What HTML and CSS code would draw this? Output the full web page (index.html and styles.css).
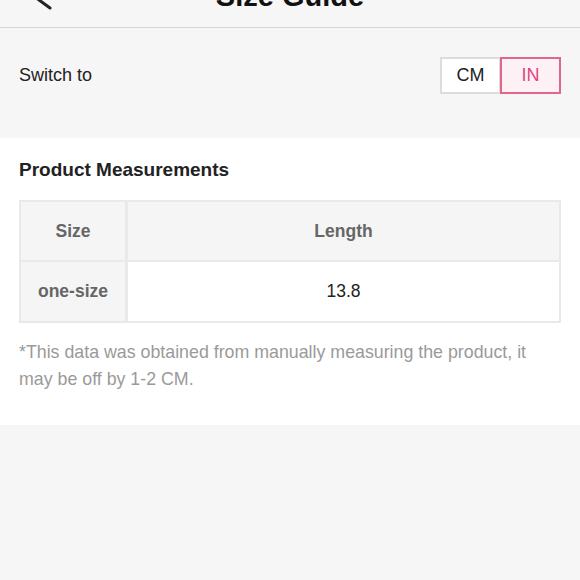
FILE: index.html
```html
<!DOCTYPE html>
<html lang="en">
<head>
<meta charset="utf-8">
<title>Size Guide</title>
<link rel="stylesheet" href="styles.css">
</head>
<body>
<header class="topbar">
  <div class="back">
    <svg width="24" height="40" viewBox="0 0 24 40" aria-hidden="true">
      <polyline points="20,3 5,14 20,25" fill="none" stroke="#222" stroke-width="3" stroke-linecap="round" stroke-linejoin="round"/>
    </svg>
  </div>
  <h1 class="title">Size Guide</h1>
  <div class="spacer"></div>
</header>

<section class="switch-row">
  <span class="switch-label">Switch to</span>
  <div class="toggle">
    <span class="opt">CM</span>
    <span class="opt active">IN</span>
  </div>
</section>

<section class="card">
  <h2 class="card-title">Product Measurements</h2>
  <table class="measure">
    <tr>
      <th class="c1">Size</th>
      <th>Length</th>
    </tr>
    <tr class="body-row">
      <th class="c1 rowhead">one-size</th>
      <td>13.8</td>
    </tr>
  </table>
  <p class="note">*This data was obtained from manually measuring the product, it may be off by 1-2 CM.</p>
</section>

<div class="rest"></div>
</body>
</html>
```

FILE: styles.css
```css
html, body {
  margin: 0;
  padding: 0;
}
body {
  background: #f6f6f6;
  font-family: "Liberation Sans", Arial, sans-serif;
  color: #222;
  width: 580px;
  overflow: hidden;
}
.topbar {
  margin-top: -40px;
  height: 68px;
  box-sizing: border-box;
  border-bottom: 1px solid #d6d6d6;
  display: grid;
  grid-template-columns: 1fr auto 1fr;
  align-items: start;
  background: #f6f6f6;
}
.back {
  padding-left: 30px;
  padding-top: 23px;
  height: 40px;
}
.back svg { display: block; }
.title {
  margin: 0;
  padding-top: 20px;
  font-size: 29px;
  line-height: 32px;
  font-weight: bold;
  color: #111;
}
.switch-row {
  display: flex;
  align-items: center;
  justify-content: space-between;
  padding: 29px 19px 44px 19px;
  height: 37px;
}
.switch-label {
  font-size: 18px;
  color: #222;
}
.toggle {
  display: flex;
}
.opt {
  width: 61px;
  height: 37px;
  box-sizing: border-box;
  display: flex;
  align-items: center;
  justify-content: center;
  font-size: 18px;
  background: #fff;
  border: 2px solid #dcdcdc;
  color: #222;
}
.opt + .opt { margin-left: -1px; }
.opt.active {
  border-color: #e0668a;
  background: #fdf1f5;
  color: #e0457b;
}
.card {
  background: #fff;
  padding: 20px 19px 32px 19px;
}
.card-title {
  margin: 0;
  font-size: 19px;
  line-height: 24px;
  font-weight: bold;
  color: #222;
}
.measure {
  margin-top: 18px;
  width: 100%;
  border-collapse: collapse;
  font-size: 17.5px;
}
.measure th, .measure td {
  border: 2px solid #e9e9e9;
  height: 58px;
  text-align: center;
  padding: 0;
}
.measure .body-row th, .measure .body-row td {
  height: 59px;
}
.measure th {
  background: #f5f5f5;
  color: #666;
  font-weight: bold;
}
.measure td {
  background: #fff;
  color: #222;
}
.measure .c1 {
  width: 104px;
  border-right-width: 3px;
}
.note {
  margin: 16px 0 0 0;
  font-size: 17.8px;
  line-height: 27px;
  color: #9a9a9a;
}
.rest {
  height: 200px;
}
```
